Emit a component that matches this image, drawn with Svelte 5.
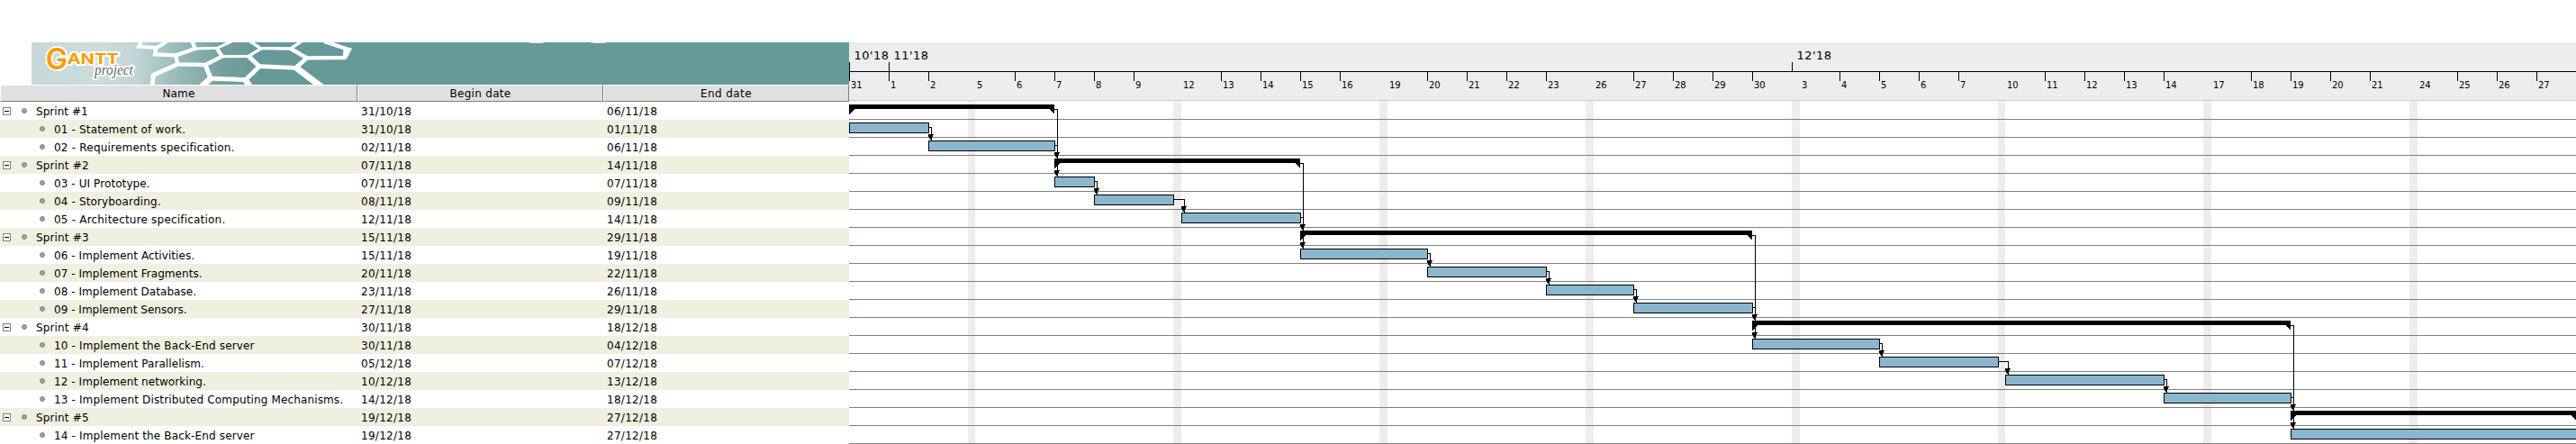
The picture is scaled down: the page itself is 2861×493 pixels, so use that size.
<script>
  const tasks = [
    { name: 'Sprint #1', begin: '31/10/18', end: '06/11/18', x1: 943, x2: 1171, group: true, ls: 0.05 },
    { name: '01 - Statement of work.', begin: '31/10/18', end: '01/11/18', x1: 943, x2: 1031, ls: 0.16 },
    { name: '02 - Requirements specification.', begin: '02/11/18', end: '06/11/18', x1: 1031, x2: 1171, ls: 0.21 },
    { name: 'Sprint #2', begin: '07/11/18', end: '14/11/18', x1: 1171, x2: 1444, group: true, ls: 0.15 },
    { name: '03 - UI Prototype.', begin: '07/11/18', end: '07/11/18', x1: 1171, x2: 1215, ls: 0.09 },
    { name: '04 - Storyboarding.', begin: '08/11/18', end: '09/11/18', x1: 1215, x2: 1303, ls: 0.14 },
    { name: '05 - Architecture specification.', begin: '12/11/18', end: '14/11/18', x1: 1312, x2: 1444, ls: 0.2 },
    { name: 'Sprint #3', begin: '15/11/18', end: '29/11/18', x1: 1444, x2: 1946, group: true, ls: 0.15 },
    { name: '06 - Implement Activities.', begin: '15/11/18', end: '19/11/18', x1: 1444, x2: 1585, ls: 0.06 },
    { name: '07 - Implement Fragments.', begin: '20/11/18', end: '22/11/18', x1: 1585, x2: 1717, ls: 0.05 },
    { name: '08 - Implement Database.', begin: '23/11/18', end: '26/11/18', x1: 1717, x2: 1814, ls: 0.04 },
    { name: '09 - Implement Sensors.', begin: '27/11/18', end: '29/11/18', x1: 1814, x2: 1946, ls: 0.02 },
    { name: 'Sprint #4', begin: '30/11/18', end: '18/12/18', x1: 1946, x2: 2544, group: true, ls: 0.15 },
    { name: '10 - Implement the Back-End server', begin: '30/11/18', end: '04/12/18', x1: 1946, x2: 2087, ls: 0.15 },
    { name: '11 - Implement Parallelism.', begin: '05/12/18', end: '07/12/18', x1: 2087, x2: 2219, ls: 0.08 },
    { name: '12 - Implement networking.', begin: '10/12/18', end: '13/12/18', x1: 2227, x2: 2403, ls: 0.07 },
    { name: '13 - Implement Distributed Computing Mechanisms.', begin: '14/12/18', end: '18/12/18', x1: 2403, x2: 2544, ls: 0.14 },
    { name: 'Sprint #5', begin: '19/12/18', end: '27/12/18', x1: 2544, x2: 2861, group: true, ls: 0.15 },
    { name: '14 - Implement the Back-End server', begin: '19/12/18', end: '27/12/18', x1: 2544, x2: 2880, ls: 0.15 }
  ];

  // [label, x]: days with a tick on the ruler
  const ticked = [
    [31, 943], [1, 987], [2, 1031], [6, 1127], [7, 1171], [8, 1215], [9, 1259], [13, 1356], [14, 1400],
    [15, 1444], [16, 1488], [20, 1585], [21, 1629], [22, 1673], [23, 1717], [27, 1814], [28, 1858],
    [29, 1902], [30, 1946], [4, 2043], [5, 2087], [6, 2131], [7, 2175], [11, 2271], [12, 2315],
    [13, 2359], [14, 2403], [18, 2500], [19, 2544], [20, 2588], [21, 2632], [25, 2729], [26, 2773], [27, 2817]
  ];
  // [monday label, weekend start, weekend end]
  const weekends = [
    [5, 1075, 1083], [12, 1303, 1312], [19, 1532, 1541], [26, 1761, 1770],
    [3, 1990, 1999], [10, 2219, 2227], [17, 2447, 2456], [24, 2676, 2685]
  ];
  const months = [["10'18", 943], ["11'18", 987], ["12'18", 1990]];

  // [from row, to row]
  const links = [
    [1, 2], [0, 3], [2, 3], [3, 7], [4, 5], [5, 6], [6, 7], [7, 12], [8, 9], [9, 10], [10, 11],
    [11, 12], [12, 17], [13, 14], [14, 15], [15, 16], [16, 17]
  ];
  const groupStarts = [3, 7, 12, 17];

  const rowTop = (i) => 113 + 20 * i;
  const linkPath = ([a, b]) => {
    const y = rowTop(a) + 8.5;
    const x = tasks[b].x1 + 3.5;
    return `M${tasks[a].x2} ${y}H${x}V${rowTop(b) + 4}`;
  };
  const arrowPath = (i) => {
    const x = tasks[i].x1 + 3;
    const y = rowTop(i) - 4;
    return `M${x - 3} ${y}h6v1h-1v2h-1v2h-1v1h-1v-1h-1v-2h-1v-2h-1z`;
  };
  const arrowRows = [...new Set(links.map((l) => l[1])), ...groupStarts.map((g) => g + 1)];
</script>

<div class="app">
  <section class="table">
    <svg class="banner" width="908" height="47" viewBox="105 51 2724 141" preserveAspectRatio="none">
      <defs>
        <linearGradient id="teal" gradientUnits="userSpaceOnUse" x1="105" y1="0" x2="860" y2="0">
          <stop offset="0" stop-color="#c6d9d8" />
          <stop offset="0.3" stop-color="#cbdcdc" />
          <stop offset="0.46" stop-color="#c2d6d6" />
          <stop offset="0.62" stop-color="#9dbebd" />
          <stop offset="0.85" stop-color="#739f9e" />
          <stop offset="1" stop-color="#669999" />
        </linearGradient>
      </defs>
      <rect x="105" y="51" width="2724" height="141" fill="url(#teal)" />
      <g fill="none" stroke="#fff" stroke-width="12" stroke-linejoin="miter">
        <path d="M471 46L462 65L522 69L556 48" />
        <path d="M520 69L516 91L588 94L650 72L640 46" stroke-width="13" />
        <path d="M650 72L724 70L772 48" stroke-width="9" />
        <path d="M585 94L592 124L684 126L740 98L722 70" stroke-width="13" />
        <path d="M740 98L828 97L870 72L830 46" stroke-width="10" />
        <path d="M870 71L968 72L1008 46" stroke-width="10" />
        <path d="M828 97L864 131L818 176L702 171L684 126" stroke-width="15" />
        <path d="M864 131L986 136L1022 103L968 72" stroke-width="14" />
        <path d="M592 124L511 160L507 196" stroke-width="15" />
        <path d="M702 171L672 198M816 174L834 200" stroke-width="20" />
        <path d="M982 132L1072 200" stroke-width="21" />
        <path d="M1022 103L1147 102L1161 75L1080 48" stroke-width="13" />
      </g>
      <path d="M1145 68L1173 71L1155 106L1142 104z" fill="#fff" />
      <ellipse cx="1788" cy="50" rx="30" ry="4" fill="#fff" />
      <ellipse cx="1995" cy="50" rx="30" ry="4" fill="#fff" />
      <g stroke="#fff" stroke-width="12" stroke-linejoin="round" paint-order="stroke" class="logo">
        <text x="152" y="142" font-size="96" textLength="73" lengthAdjust="spacingAndGlyphs" class="brand">G</text>
        <text x="224" y="123" font-size="49" textLength="171" lengthAdjust="spacingAndGlyphs" class="brand bold">ANTT</text>
        <text x="315" y="158" font-size="50" textLength="128" lengthAdjust="spacingAndGlyphs" class="project">project</text>
      </g>
    </svg>

    <div class="head">
      <div class="th" style="letter-spacing: 0.15px">Name</div>
      <div class="th" style="letter-spacing: 0.3px">Begin date</div>
      <div class="th" style="letter-spacing: 0.4px">End date</div>
    </div>

    {#each tasks as t, i}
      <div class="row" class:odd={i % 2 === 1}>
        <div class="cell name" class:child={!t.group}>
          {#if t.group}<span class="toggle"></span>{/if}
          <span class="bullet"></span>
          <span class="label" style="letter-spacing: {t.ls}px">{t.name}</span>
        </div>
        <div class="cell date">{t.begin}</div>
        <div class="cell date">{t.end}</div>
      </div>
    {/each}
  </section>

  <svg class="chart" width="1918" height="446" viewBox="943 47 1918 446">
    <g shape-rendering="crispEdges">
      <rect x="943" y="47" width="1918" height="64" fill="#ededed" />
      <rect x="943" y="111" width="1918" height="1" fill="#cbcbcb" />
      {#each weekends as [, a, b]}
        <rect x={a} y="112" width={b - a} height="380" fill="#ededed" />
      {/each}
      {#each tasks as _, i}
        <rect x="943" y={rowTop(i) + 19} width="1918" height="1" fill="#808080" />
      {/each}
      <rect x="943" y="79" width="1918" height="1" />
      {#each months as [, x]}
        <rect {x} y="69" width="1" height="11" />
      {/each}
      {#each ticked as [, x]}
        <rect {x} y="80" width="1" height="10" />
      {/each}

      {#each tasks as t, i}
        {#if t.group}
          <rect x={t.x1} y={rowTop(i) + 3} width={t.x2 - t.x1} height="5" />
          <path d="M{t.x1} {rowTop(i) + 8}h6l-6 6z" />
          <path d="M{t.x2} {rowTop(i) + 8}h-6l6 6z" />
        {:else}
          <rect x={t.x1 + 0.5} y={rowTop(i) + 3.5} width={t.x2 - t.x1} height="11" fill="#8cb6ce" stroke="#000" />
        {/if}
      {/each}

      {#each links as l}
        <path d={linkPath(l)} fill="none" stroke="#000" />
      {/each}
      {#each groupStarts as g}
        <path d="M{tasks[g].x1 + 3.5} {rowTop(g) + 5}V{rowTop(g + 1) + 3}" stroke="#000" />
      {/each}
      {#each arrowRows as r}
        <path d={arrowPath(r)} />
      {/each}
    </g>

    <g class="months">
      {#each months as [label, x]}
        <text x={x + 5.5} y="66" textLength="38.5">{label}</text>
      {/each}
    </g>
    <g class="days">
      {#each ticked as [label, x]}
        <text x={x + 2} y="98">{label}</text>
      {/each}
      {#each weekends as [label, , b]}
        <text x={b + 2} y="98">{label}</text>
      {/each}
    </g>
  </svg>
</div>

<style>
  :global(body) {
    background: #fff;
  }
  .app {
    display: flex;
    align-items: flex-start;
    width: 2861px;
    height: 493px;
    padding-top: 47px;
    box-sizing: border-box;
    overflow: hidden;
    background: #fff;
    color: #000;
    font: 12px 'DejaVu Sans', sans-serif;
  }
  .table {
    width: 943px;
    flex: none;
  }
  .banner {
    display: block;
    margin-left: 35px;
  }
  .brand {
    font-family: Inter, sans-serif;
    font-weight: 600;
    fill: #ff9b00;
  }
  .bold {
    font-weight: 700;
  }
  .project {
    font-family: 'Liberation Serif', serif;
    font-style: italic;
    fill: #666;
  }
  .head,
  .row {
    display: grid;
    grid-template-columns: 397px 273px 273px;
  }
  .head {
    height: 19px;
  }
  .th {
    box-sizing: border-box;
    height: 19px;
    line-height: 19px;
    text-align: center;
    background: #e0e0e0;
    border: solid;
    border-width: 1px;
    border-color: #fff #808080 #808080 #fff;
  }
  .row {
    height: 20px;
    line-height: 23px;
  }
  .row.odd {
    background: #eff0e0;
  }
  .cell {
    display: flex;
    height: 20px;
    white-space: pre;
  }
  .cell.name {
    padding-left: 3px;
  }
  .cell.child {
    padding-left: 44px;
  }
  .date {
    padding-left: 4px;
    letter-spacing: 0.28px;
  }
  .toggle {
    box-sizing: border-box;
    width: 9px;
    height: 9px;
    margin: 6px 12px 0 0;
    border: 1px solid #808080;
    background: linear-gradient(#000, #000) center / 5px 1px no-repeat #fff;
  }
  .bullet {
    box-sizing: border-box;
    width: 6px;
    height: 6px;
    margin: 7px 10px 0 0;
    border: 1px solid #858588;
    border-radius: 50%;
    background: #a0a0a3;
  }
  .months {
    font-size: 13px;
  }
  .days {
    font-size: 10px;
  }
</style>
